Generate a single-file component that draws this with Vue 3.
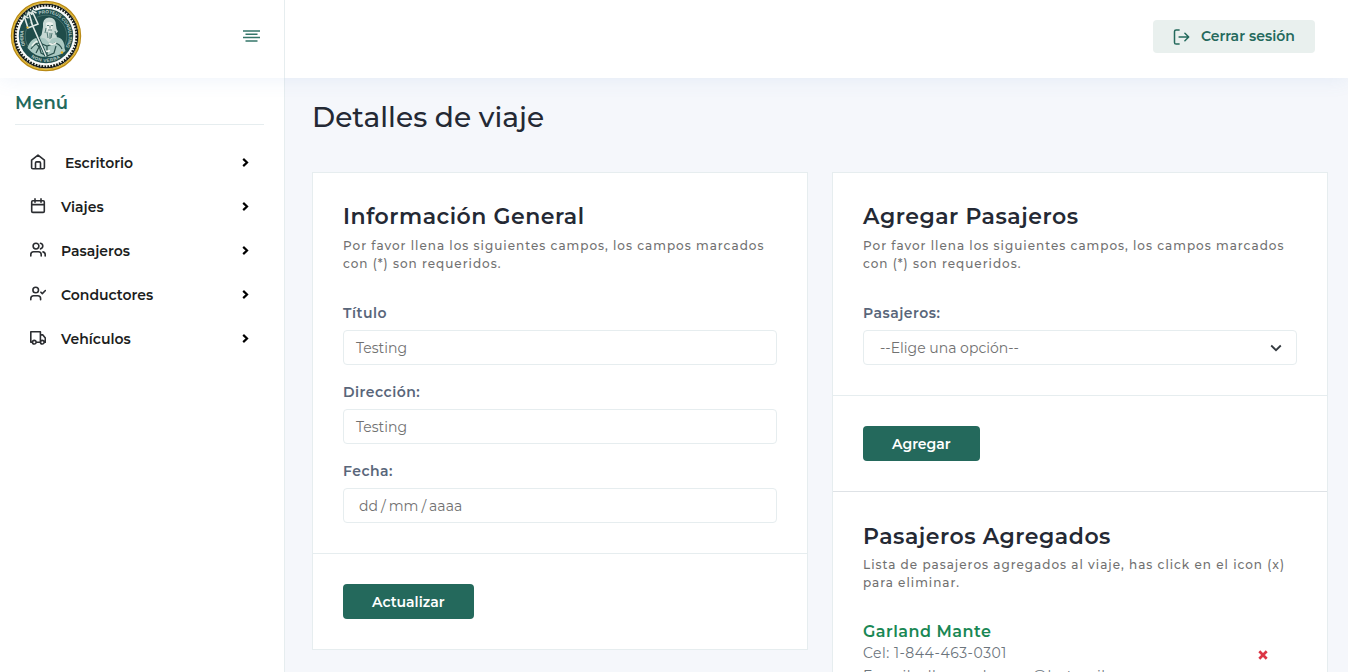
<script setup>
const menu = [
  { label: 'Escritorio', icon: 'home' },
  { label: 'Viajes', icon: 'calendar' },
  { label: 'Pasajeros', icon: 'users' },
  { label: 'Conductores', icon: 'check' },
  { label: 'Vehículos', icon: 'truck' },
]
const icons = {
  home: 'M1.6 6.2 8 1.1l6.4 5.1v7.2q0 1.3-1.3 1.3H2.9q-1.3 0-1.3-1.3zM5.5 14.5V9q0-1.1 1.1-1.1h2.8q1.1 0 1.1 1.1v5.5',
  calendar: 'M2.8 2.8h10.4q1.1 0 1.1 1.1v9.4q0 1.1-1.1 1.1H2.8q-1.1 0-1.1-1.1V3.9q0-1.1 1.1-1.1zM1.7 6.6h12.6M5 .9v3.4M11 .9v3.4',
  users: 'M.8 13.9v-1.4q0-2.7 2.8-2.7h4.8q2.8 0 2.8 2.7v1.4M6 1.2a2.9 2.9 0 1 1 0 5.8 2.9 2.9 0 0 1 0-5.8zM10.5 1.3q2.3.5 2.3 2.8t-2.3 2.8M13 9.9q2.2.5 2.2 2.7v1.3',
  check: 'M.8 13.7v-1.2q0-2.7 2.8-2.7h4.2q2.8 0 2.8 2.7v1.2M5.7 1.2a2.8 2.8 0 1 1 0 5.6 2.8 2.8 0 0 1 0-5.6zM10.9 6.2l1.4 1.4 3.1-3.1',
  truck: 'M2.4 12.2H.8V1.8h9.6v10.4H6.2M10.4 4.9h2.5l2.4 3v4.3h-1.2M2.5 12.2a1.8 1.8 0 1 0 3.6 0 1.8 1.8 0 0 0-3.6 0zM10.5 12.2a1.8 1.8 0 1 0 3.6 0 1.8 1.8 0 0 0-3.6 0z',
}
const help = 'Por favor llena los siguientes campos, los campos marcados con (*) son requeridos.'
</script>

<template>
  <div class="page">
    <header class="topbar">
      <div class="brand">
        <svg class="logo" viewBox="0 0 72 72">
          <defs>
            <path id="arcTop" d="M29 14.6A22.5 22.5 0 0 1 54.5 49" />
            <path id="arcBottom" d="M21 57.3A26 26 0 0 0 52 56.5" />
            <path id="arcLeft" d="M15.4 45.5A22.7 22.7 0 0 1 15 27" />
          </defs>
          <circle cx="36" cy="36" r="33.8" fill="#f8faf7" stroke="#b98a17" stroke-width="2.8" />
          <circle cx="36" cy="36" r="33.6" fill="none" stroke="#e6c341" stroke-width="1" />
          <circle cx="36" cy="36" r="30.7" fill="none" stroke="#141b18" stroke-width="2.6" stroke-dasharray="1.75 1.25" />
          <circle cx="36" cy="36" r="31.8" fill="none" stroke="#101513" stroke-width="1.1" />
          <circle cx="36" cy="36" r="28.8" fill="#fafbfa" />
          <circle cx="36" cy="36" r="27.2" fill="#1f4e4d" />
          <circle cx="36" cy="36" r="20.8" fill="#1f4c4a" stroke="#6d908b" stroke-width=".5" />
          <path d="M17.5 48c2-7 6-10 12-11l4-4h10l3 4c6 1 8 5 8 11l1 3q-7 6-19 6t-19-9z" fill="#a9c8c2" />
          <path d="M33 27q-1-9 6-9.500 7 0 7 8 0 3 2 6l-2 2 1 4-5 1-3 4-4-4-4-1 1-5z" fill="#c8d9d4" />
          <path d="M36 23q3-2 7 0l-1 7-2.500 2-2.500-2z" fill="#edf2ee" />
          <path d="M37 25.500h2m2 0h2m-3 0v3m-2 1.500h4m-6-2-1 5m2-1 1 6m2-5v6m2-6-1 5m4-7 1 4" fill="none" stroke="#31605b" stroke-width=".8" />
          <path d="M21 49q4-6 9-6l7 3 8-3q5 1 7 6M29 45l2 8 6 3 7-3 2-7M37 46v11M25 42l4 5-3 6" fill="none" stroke="#294f4b" stroke-width="1.2" />
          <path d="M22 46q3-5 8-5.500m9 3q5 2 7-1m-14 7q4 3 8 1" fill="none" stroke="#eef3ed" stroke-width="1.5" />
          <path d="M21 22 36 56M14.500 17 18 28l10-4-5-11M19 13.500 23 27M13 20l1.500-4 4 2M17 16l1.500-4 4 2M21.500 15l1-4 4 2" fill="none" stroke="#1c4a49" stroke-width="3.2" />
          <path d="M21 22 36 56M14.500 17 18 28l10-4-5-11M19 13.500 23 27M13 20l1.500-4 4 2M17 16l1.500-4 4 2M21.500 15l1-4 4 2" fill="none" stroke="#dfe8e4" stroke-width="1.6" />
          <text class="seal"><textPath href="#arcTop" textLength="54">PROTEUS CONSULTING</textPath></text>
          <text class="seal"><textPath href="#arcBottom" textLength="31">NON VERBA</textPath></text>
          <text class="seal"><textPath href="#arcLeft" textLength="15">OPERA</textPath></text>
          <circle cx="17.500" cy="27.500" r="1.100" fill="#e8b21c" />
          <circle cx="52" cy="52.500" r="1.200" fill="#e8b21c" />
        </svg>
        <svg class="burger" viewBox="0 0 17 12">
          <path d="M0 1h17M0 7.500h17M2.500 4.300h12M2.500 11h12" fill="none" stroke="#347569" stroke-width="1.600" />
        </svg>
      </div>
      <button class="logout">
        <svg viewBox="0 0 16 16"><path d="M5.600 1H2.600Q1 1 1 2.600v10.800Q1 15 2.600 15H5.600M5.600 8H15M11.400 4.200 15.200 8l-3.800 3.800" /></svg>
        <span>Cerrar sesión</span>
      </button>
    </header>
    <div class="body">
      <aside class="sidebar">
        <h6>Menú</h6>
        <nav>
          <a v-for="item in menu" :key="item.label">
            <svg class="mi" viewBox="0 0 16 16"><path :d="icons[item.icon]" /></svg>
            <span :class="{ wide: item.icon === 'home' }">{{ item.label }}</span>
            <svg class="chev" viewBox="0 0 7 9"><path d="M1.200.900 5 4.500 1.200 8.100" /></svg>
          </a>
        </nav>
      </aside>
      <main>
        <h3>Detalles de viaje</h3>
        <div class="cards">
          <section class="card">
            <div class="inner">
              <h5>Información General</h5>
              <p class="help">{{ help }}</p>
              <div class="field"><label>Título</label><div class="control">Testing</div></div>
              <div class="field"><label>Dirección:</label><div class="control">Testing</div></div>
              <div class="field"><label>Fecha:</label><div class="control date"><span>dd</span><span>/</span><span>mm</span><span>/</span><span>aaaa</span></div></div>
            </div>
            <div class="foot"><button class="primary">Actualizar</button></div>
          </section>
          <section class="card">
            <div class="inner">
              <h5>Agregar Pasajeros</h5>
              <p class="help">{{ help }}</p>
              <div class="field">
                <label>Pasajeros:</label>
                <div class="control select">--Elige una opción--
                  <svg viewBox="0 0 12 8"><path d="M1.200 1.500 6 6.200l4.800-4.700" /></svg>
                </div>
              </div>
            </div>
            <div class="foot"><button class="primary">Agregar</button></div>
            <div class="list">
              <h5>Pasajeros Agregados</h5>
              <p class="help">Lista de pasajeros agregados al viaje, has click en el icon (x) para eliminar.</p>
              <div class="person">
                <div>
                  <h6>Garland Mante</h6>
                  <p>Cel: 1-844-463-0301</p>
                  <p class="mail">E-mail: ellaume.bearse@hotmail.com</p>
                </div>
                <svg viewBox="0 0 10 10"><path d="M1.300 1.300l7.400 7.400M8.700 1.300 1.300 8.700" /></svg>
              </div>
            </div>
          </section>
        </div>
      </main>
    </div>
  </div>
</template>

<style>
body { margin: 0; overflow: hidden; }
</style>
<style scoped>
.page { height: 672px; overflow: hidden; display: flex; flex-direction: column; font-family: Montserrat, Inter, sans-serif; font-size: 14px; line-height: 21px; color: #242934; background: #f5f7fb; }
h3, h5, h6, p { margin: 0; }
button { font: inherit; border: 0; }
.topbar { height: 78px; flex: none; display: flex; justify-content: space-between; background: #fff; box-shadow: 0 0 20px rgba(89, 142, 209, .12); position: relative; z-index: 2; }
.brand { width: 284px; border-right: 1px solid #e6edef; display: flex; justify-content: space-between; }
.logo { width: 72px; height: 72px; margin-left: 10px; }
.seal { font-family: "Liberation Sans", sans-serif; font-size: 4.6px; font-weight: 700; fill: #bccfca; }
.burger { width: 17px; height: 12px; margin: 30px 24.5px 0 0; }
.logout { width: 162px; height: 33px; margin: 20px 33px 0 0; padding: 0 20px; border-radius: 4px; background: #e9f0ee; color: #24695c; font-weight: 600; letter-spacing: .04px; display: flex; align-items: center; justify-content: space-between; }
.logout svg { width: 17px; height: 16px; margin-top: 1px; fill: none; stroke: #24695c; stroke-width: 1.5; stroke-linecap: round; stroke-linejoin: round; }
.body { display: flex; flex: 1; min-height: 0; }
.sidebar { width: 284px; flex: none; border-right: 1px solid #e6edef; background: #fff; }
.sidebar h6 { margin: 0 20px 0 15px; padding: 15px 0 10px; border-bottom: 1px solid #e6edef; font-size: 18px; font-weight: 600; line-height: 21px; color: #24695c; }
nav { padding: 16px 35px 0 30px; }
nav a { height: 44px; display: flex; align-items: center; font-weight: 600; color: #1c1d20; }
.mi { width: 16px; height: 16px; margin: -2px 15px 0 0; fill: none; stroke: #2b2d31; stroke-width: 1.6; stroke-linecap: round; stroke-linejoin: round; }
.wide { margin-left: 4px; }
.chev { width: 7px; height: 9px; margin: -1px 0 0 auto; fill: none; stroke: #000; stroke-width: 2.2; }
main { flex: 1; padding: 22px 20px 0 27px; }
h3 { font-size: 28px; font-weight: 500; line-height: 34px; letter-spacing: .05px; }
.cards { display: grid; grid-template-columns: 496px 496px; gap: 24px; align-items: start; margin-top: 38px; }
.card { background: #fff; border: 1px solid #e6edef; box-sizing: border-box; }
.inner { padding: 31px 30px 13px; }
h5 { font-size: 22px; font-weight: 600; line-height: 26px; letter-spacing: .52px; color: #242934; }
.help { margin: 7px 0 30px; font-size: 12px; font-weight: 500; line-height: 18px; letter-spacing: 1px; color: #717171; }
.field { padding-bottom: 17px; }
label { display: block; font-weight: 600; letter-spacing: .5px; color: #59667a; margin-bottom: 6px; }
.control { height: 35px; box-sizing: border-box; border: 1px solid #e6edef; border-radius: 4px; padding: 2px 12px 0; display: flex; align-items: center; color: #717171; font-weight: 400; }
.date { padding-left: 15px; gap: 3px; }
.select { padding: 2px 14px 0 16px; justify-content: space-between; }
.select svg { width: 12px; height: 8px; margin-top: -2px; fill: none; stroke: #343a40; stroke-width: 1.8; }
.foot { border-top: 1px solid #e6edef; padding: 30px; display: flex; }
.primary { height: 35px; padding: 2px 29px 0; border-radius: 4px; background: #24695c; color: #fff; font-weight: 600; }
.list { border-top: 1px solid #dee2e6; padding: 32px 30px 31px; }
.list .help { margin-top: 6px; margin-bottom: 29px; }
.person { display: flex; justify-content: space-between; color: #6c757d; letter-spacing: .5px; }
.person h6 { font-size: 16px; font-weight: 600; line-height: 21px; color: #198754; margin-bottom: 1px; }
.person .mail { margin-top: 2px; }
.person svg { width: 10px; height: 10px; margin: 28.5px 29px 0 0; fill: none; stroke: #dc3545; stroke-width: 2.7; }
</style>
